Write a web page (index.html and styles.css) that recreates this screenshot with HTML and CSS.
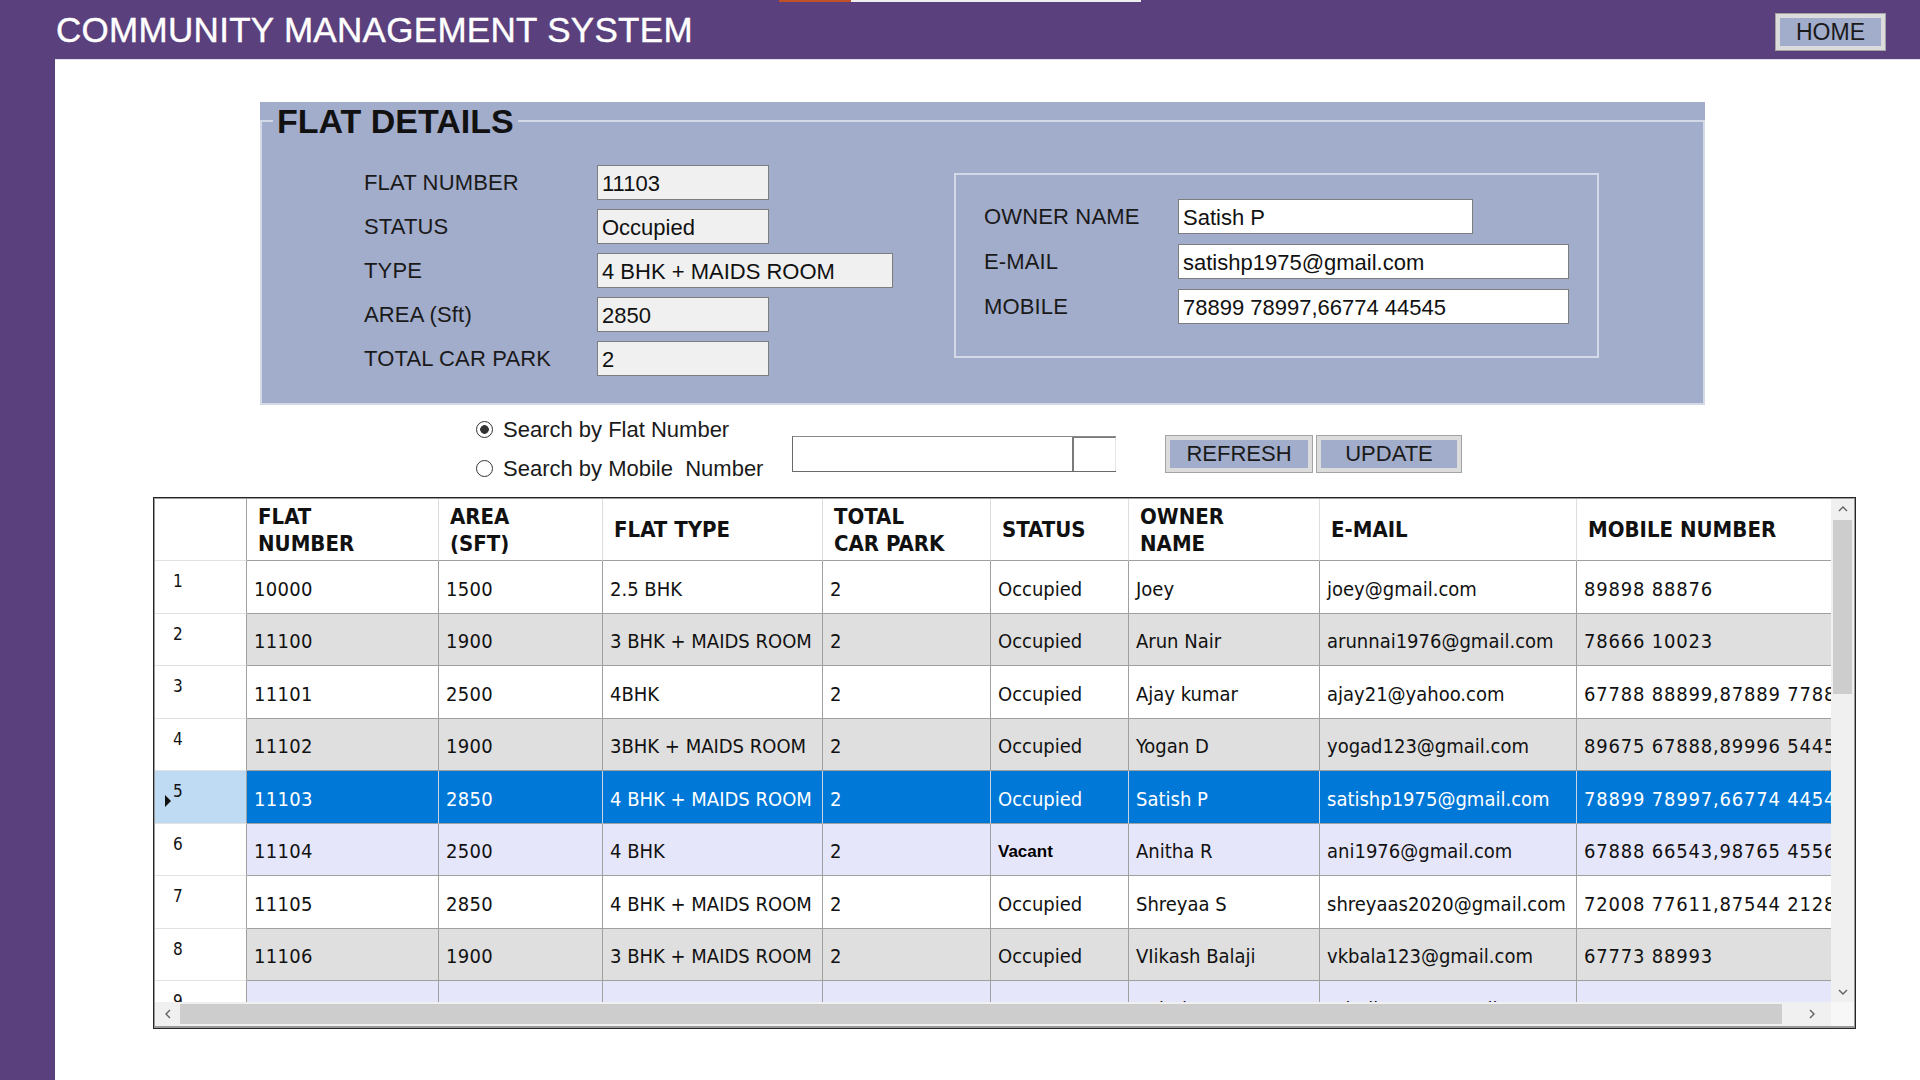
FILE: index.html
```html
<!DOCTYPE html>
<html lang="en">
<head>
<meta charset="utf-8">
<title>Community Management System</title>
<link rel="stylesheet" href="styles.css">
</head>
<body>
<header class="titlebar">
  <div class="tab-strip"><span class="tab-orange"></span><span class="tab-white"></span></div>
  <h1 class="app-title">COMMUNITY MANAGEMENT SYSTEM</h1>
  <button class="btn btn-home">HOME</button>
</header>
<main class="content">
  <section class="panel">
    <fieldset class="group">
      <legend class="group-title">FLAT DETAILS</legend>
      <div class="group-body">
        <div class="form-left">
          <div class="lbl">FLAT NUMBER</div><div class="field ro w172">11103</div>
          <div class="lbl">STATUS</div><div class="field ro w172">Occupied</div>
          <div class="lbl">TYPE</div><div class="field ro w296">4 BHK + MAIDS ROOM</div>
          <div class="lbl">AREA (Sft)</div><div class="field ro w172">2850</div>
          <div class="lbl">TOTAL CAR PARK</div><div class="field ro w172">2</div>
        </div>
        <div class="owner-box">
          <div class="lbl">OWNER NAME</div><div class="field w295">Satish P</div>
          <div class="lbl">E-MAIL</div><div class="field w391">satishp1975@gmail.com</div>
          <div class="lbl">MOBILE</div><div class="field w391">78899 78997,66774 44545</div>
        </div>
      </div>
    </fieldset>
  </section>

  <section class="search">
    <div class="radios">
      <div class="radio-row"><span class="radio checked"></span><span>Search by Flat Number</span></div>
      <div class="radio-row"><span class="radio"></span><span class="pre">Search by Mobile  Number</span></div>
    </div>
    <div class="searchbox"><div class="search-text"></div><div class="search-side"></div></div>
    <div class="btns">
      <button class="btn btn-refresh">REFRESH</button>
      <button class="btn btn-update">UPDATE</button>
    </div>
  </section>

  <section class="grid-view">
    <div class="grid-main">
      <div class="grid-clip">
        <div class="g-row g-head">
          <div class="hc rh"></div>
          <div class="hc">FLAT<br>NUMBER</div>
          <div class="hc">AREA<br>(SFT)</div>
          <div class="hc">FLAT TYPE</div>
          <div class="hc">TOTAL<br>CAR PARK</div>
          <div class="hc">STATUS</div>
          <div class="hc">OWNER<br>NAME</div>
          <div class="hc">E-MAIL</div>
          <div class="hc">MOBILE NUMBER</div>
        </div>
        <div class="g-row r-white">
          <div class="rh">1</div><div class="c">10000</div><div class="c">1500</div><div class="c">2.5 BHK</div><div class="c">2</div><div class="c">Occupied</div><div class="c">Joey</div><div class="c">joey@gmail.com</div><div class="c">89898 88876</div>
        </div>
        <div class="g-row r-gray">
          <div class="rh">2</div><div class="c">11100</div><div class="c">1900</div><div class="c">3 BHK + MAIDS ROOM</div><div class="c">2</div><div class="c">Occupied</div><div class="c">Arun Nair</div><div class="c">arunnai1976@gmail.com</div><div class="c">78666 10023</div>
        </div>
        <div class="g-row r-white">
          <div class="rh">3</div><div class="c">11101</div><div class="c">2500</div><div class="c">4BHK</div><div class="c">2</div><div class="c">Occupied</div><div class="c">Ajay kumar</div><div class="c">ajay21@yahoo.com</div><div class="c">67788 88899,87889 77889</div>
        </div>
        <div class="g-row r-gray">
          <div class="rh">4</div><div class="c">11102</div><div class="c">1900</div><div class="c">3BHK + MAIDS ROOM</div><div class="c">2</div><div class="c">Occupied</div><div class="c">Yogan D</div><div class="c">yogad123@gmail.com</div><div class="c">89675 67888,89996 54455</div>
        </div>
        <div class="g-row r-sel">
          <div class="rh"><span class="cur"></span>5</div><div class="c">11103</div><div class="c">2850</div><div class="c">4 BHK + MAIDS ROOM</div><div class="c">2</div><div class="c">Occupied</div><div class="c">Satish P</div><div class="c">satishp1975@gmail.com</div><div class="c">78899 78997,66774 44545</div>
        </div>
        <div class="g-row r-lav">
          <div class="rh">6</div><div class="c">11104</div><div class="c">2500</div><div class="c">4 BHK</div><div class="c">2</div><div class="c"><span class="vacant">Vacant</span></div><div class="c">Anitha R</div><div class="c">ani1976@gmail.com</div><div class="c">67888 66543,98765 45567</div>
        </div>
        <div class="g-row r-white">
          <div class="rh">7</div><div class="c">11105</div><div class="c">2850</div><div class="c">4 BHK + MAIDS ROOM</div><div class="c">2</div><div class="c">Occupied</div><div class="c">Shreyaa S</div><div class="c">shreyaas2020@gmail.com</div><div class="c">72008 77611,87544 21287</div>
        </div>
        <div class="g-row r-gray">
          <div class="rh">8</div><div class="c">11106</div><div class="c">1900</div><div class="c">3 BHK + MAIDS ROOM</div><div class="c">2</div><div class="c">Occupied</div><div class="c">VIikash Balaji</div><div class="c">vkbala123@gmail.com</div><div class="c">67773 88993</div>
        </div>
        <div class="g-row r-lav">
          <div class="rh">9</div><div class="c">11107</div><div class="c">1500</div><div class="c">2.5 BHK</div><div class="c">1</div><div class="c"><span class="vacant">Vacant</span></div><div class="c">Rahul K</div><div class="c">rahulk1980@gmail.com</div><div class="c">98765 43210</div>
        </div>
      </div>
      <div class="vscroll">
        <div class="arrow-v"><svg width="10" height="7" viewBox="0 0 10 7"><path d="M1 6 L5 2 L9 6" fill="none" stroke="#606060" stroke-width="1.4"/></svg></div>
        <div class="vthumb"></div>
        <div class="vspace"></div>
        <div class="arrow-v"><svg width="10" height="7" viewBox="0 0 10 7"><path d="M1 1 L5 5 L9 1" fill="none" stroke="#606060" stroke-width="1.4"/></svg></div>
      </div>
    </div>
    <div class="hscroll">
      <div class="hbar">
        <div class="arrow-h"><svg width="7" height="10" viewBox="0 0 7 10"><path d="M6 1 L2 5 L6 9" fill="none" stroke="#606060" stroke-width="1.4"/></svg></div>
        <div class="hthumb"></div>
        <div class="arrow-h"><svg width="7" height="10" viewBox="0 0 7 10"><path d="M1 1 L5 5 L1 9" fill="none" stroke="#606060" stroke-width="1.4"/></svg></div>
      </div>
      <div class="corner"></div>
    </div>
  </section>
</main>
</body>
</html>
```

FILE: styles.css
```css
html, body {
  margin: 0;
  padding: 0;
}
body {
  width: 1920px;
  height: 1080px;
  overflow: hidden;
  background: #5a407c;
  font-family: "Liberation Sans", Arial, sans-serif;
  color: #1a1a1a;
}

/* ---------- title bar ---------- */
.titlebar {
  position: relative;
  height: 59px;
  display: flex;
  align-items: flex-start;
  justify-content: space-between;
  padding: 0 34px 0 56px;
}
.tab-strip {
  position: absolute;
  left: 779px;
  top: 0;
  display: flex;
  height: 2px;
}
.tab-orange { width: 72px; background: #c0502a; }
.tab-white { width: 290px; background: #eeeeee; }
.app-title {
  margin: 11px 0 0 0;
  color: #ffffff;
  font-size: 35px;
  font-weight: normal;
  line-height: 37px;
  letter-spacing: 0.3px;
  -webkit-text-stroke: 0.4px #ffffff;
}

/* ---------- buttons ---------- */
.btn {
  height: 38px;
  box-sizing: border-box;
  border: 1px solid #a4a4a4;
  box-shadow: inset 0 0 0 4px #dcdcdc;
  background: #a2accb;
  font-family: "Liberation Sans", Arial, sans-serif;
  font-size: 22px;
  color: #1a1a1a;
  padding: 0;
  margin: 0;
}
.btn-home {
  width: 111px;
  margin-top: 13px;
  font-size: 23px;
}
.btn-refresh { width: 148px; }
.btn-update { width: 146px; margin-left: 3px; }

/* ---------- content ---------- */
.content {
  margin-left: 55px;
  height: 1021px;
  background: #ffffff;
  border-top: 1px solid #e2e0ea;
  box-sizing: border-box;
  padding-top: 42px;
}

.panel {
  margin-left: 205px;
  width: 1445px;
  background: #a2accb;
}
.group {
  margin: 0;
  padding: 25px 0 27px 0;
  border: 2px solid #d4d9e8;
  min-width: 0;
}
.group-title {
  margin-left: 11px;
  padding: 0 4px;
  font-size: 34px;
  font-weight: bold;
  line-height: 38px;
  color: #111111;
}
.group-body {
  display: flex;
  align-items: flex-start;
}
.form-left {
  margin-left: 102px;
  display: grid;
  grid-template-columns: 233px auto;
  grid-auto-rows: 35px;
  row-gap: 9px;
  align-items: center;
}
.owner-box {
  margin-left: 61px;
  margin-top: 8px;
  width: 645px;
  height: 185px;
  box-sizing: border-box;
  border: 2px solid #d4d9e8;
  padding: 24px 0 0 28px;
  display: grid;
  grid-template-columns: 194px auto;
  grid-auto-rows: 35px;
  row-gap: 10px;
  align-items: center;
  align-content: start;
}
.lbl {
  font-size: 22px;
  color: #1a1a1a;
  white-space: nowrap;
  letter-spacing: 0.15px;
}
.field {
  height: 35px;
  box-sizing: border-box;
  border: 1px solid #7d7d7d;
  background: #ffffff;
  font-size: 22px;
  line-height: 35px;
  padding: 0 4px;
  color: #111111;
  white-space: nowrap;
  overflow: hidden;
}
.field.ro { background: #f0f0f0; }
.w172 { width: 172px; }
.w296 { width: 296px; }
.w295 { width: 295px; }
.w391 { width: 391px; }

/* ---------- search ---------- */
.search {
  height: 92px;
  box-sizing: border-box;
  padding: 5px 0 0 421px;
  display: flex;
  align-items: flex-start;
}
.radios {
  width: 316px;
  display: flex;
  flex-direction: column;
}
.radio-row {
  height: 39px;
  display: flex;
  align-items: center;
  font-size: 22px;
  color: #1a1a1a;
}
.pre { white-space: pre; }
.radio {
  width: 17px;
  height: 17px;
  box-sizing: border-box;
  border-radius: 50%;
  border: 1px solid #333333;
  background: #ffffff;
  margin-right: 10px;
  flex: none;
}
.radio.checked {
  background: radial-gradient(circle, #333333 0 4px, #ffffff 4.6px);
}
.searchbox {
  margin-top: 26px;
  width: 324px;
  height: 36px;
  box-sizing: border-box;
  display: flex;
  border-top: 1px solid #8a8a8a;
  border-left: 1px solid #6a6a6a;
  border-bottom: 1px solid #6a6a6a;
  background: #ffffff;
}
.search-text { flex: 1; }
.search-side {
  width: 44px;
  box-sizing: border-box;
  border-left: 2px solid #7a7a7a;
  border-top: 1px solid #7a7a7a;
  border-right: 1px solid #e6e6e6;
}
.btns {
  margin-top: 25px;
  margin-left: 49px;
  display: flex;
}

/* ---------- grid ---------- */
.grid-view {
  margin-left: 98px;
  width: 1703px;
  height: 532px;
  box-sizing: border-box;
  border: 1px solid #262626;
  padding: 1px;
  background: #9a9a9a;
  display: flex;
  flex-direction: column;
}
.grid-main {
  display: flex;
  height: 503px;
}
.grid-clip {
  width: 1676px;
  height: 503px;
  overflow: hidden;
  background: #ffffff;
  font-family: "DejaVu Sans Condensed", "DejaVu Sans", sans-serif;
}
.g-row {
  display: grid;
  grid-template-columns: 92px 192px 164px 220px 168px 138px 191px 257px 300px;
  height: 52.5px;
  width: 1722px;
}
.g-head {
  height: 62px;
  background: #ffffff;
}
.hc {
  box-sizing: border-box;
  border-right: 1px solid #dedede;
  border-bottom: 1px solid #a0a0a0;
  padding-left: 11px;
  display: flex;
  align-items: center;
  font-weight: bold;
  font-size: 22px;
  line-height: 27px;
  color: #111111;
  white-space: nowrap;
}
.hc.rh {
  border-right: 1px solid #a0a0a0;
}
.rh {
  box-sizing: border-box;
  background: #ffffff;
  border-right: 1px solid #a0a0a0;
  border-bottom: 1px solid #e2e2e2;
  padding: 10px 0 0 18px;
  font-size: 17px;
  line-height: 20px;
  color: #111111;
  position: relative;
}
.c {
  box-sizing: border-box;
  border-right: 1px solid #a0a0a0;
  border-bottom: 1px solid #a0a0a0;
  padding: 5px 0 0 7px;
  display: flex;
  align-items: center;
  font-size: 20px;
  line-height: 23px;
  color: #111111;
  white-space: nowrap;
  overflow: hidden;
}
.c:nth-child(2), .c:nth-child(3) { letter-spacing: 0.3px; }
.c:nth-child(9) { letter-spacing: 0.8px; }
.r-white .c { background: #ffffff; }
.r-gray .c { background: #dfdfdf; }
.r-lav .c { background: #e6e6fa; }
.r-sel .c {
  background: #0078d7;
  color: #ffffff;
  border-right-color: #c8d4e4;
}
.r-sel .rh { background: #bfdbf3; }
.cur {
  position: absolute;
  left: 10px;
  top: 24px;
  width: 0;
  height: 0;
  border-top: 6px solid transparent;
  border-bottom: 6px solid transparent;
  border-left: 6px solid #111111;
}
.vacant {
  font-family: "Liberation Sans", Arial, sans-serif;
  font-weight: bold;
  font-size: 17px;
  color: #000000;
  letter-spacing: 0;
}

.vscroll {
  width: 23px;
  height: 503px;
  background: #f0f0f0;
  display: flex;
  flex-direction: column;
  align-items: center;
}
.arrow-v {
  height: 19px;
  display: flex;
  align-items: center;
  justify-content: center;
}
.vthumb {
  margin-top: 2px;
  width: 19px;
  height: 174px;
  background: #cdcdcd;
}
.vspace { flex: 1; }

.hscroll {
  display: flex;
  height: 24px;
}
.hbar {
  width: 1676px;
  background: #f0f0f0;
  display: flex;
  align-items: center;
}
.arrow-h {
  width: 24px;
  height: 24px;
  display: flex;
  align-items: center;
  justify-content: center;
}
.hthumb {
  margin-left: 1px;
  width: 1602px;
  height: 20px;
  background: #cdcdcd;
}
.hbar .arrow-h:last-child { margin-left: auto; margin-right: 7px; }
.corner {
  width: 23px;
  background: #f7f7f7;
}
```
